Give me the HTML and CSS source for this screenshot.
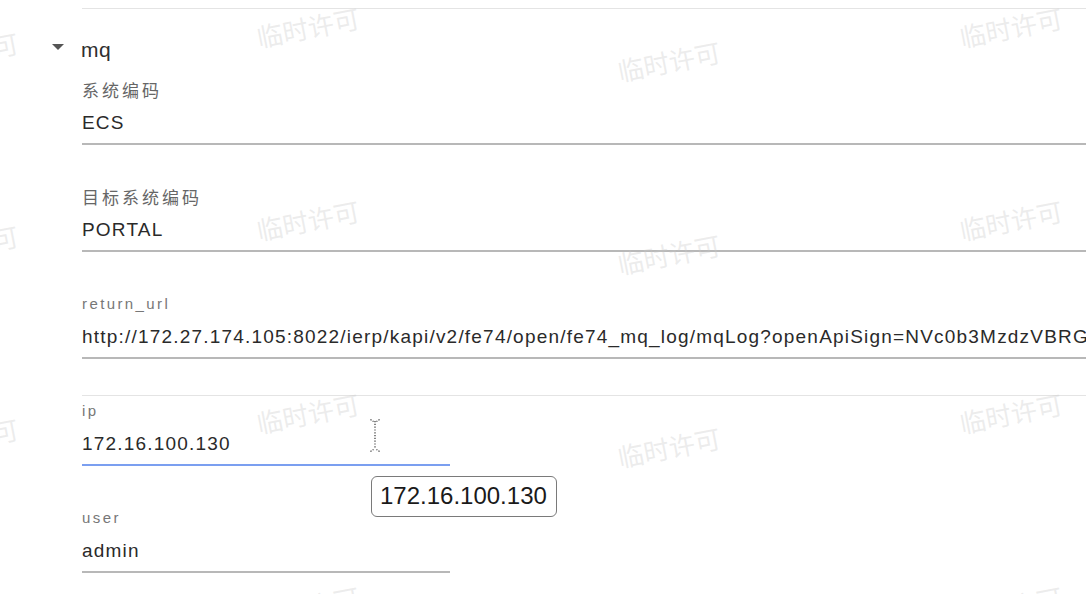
FILE: index.html
```html
<!DOCTYPE html>
<html lang="zh">
<head>
<meta charset="utf-8">
<title>mq</title>
<link rel="stylesheet" href="styles.css">
</head>
<body>
<div class="page">
  <div class="form">
    <div class="prev-group"></div>
    <div class="group-head">
      <span class="caret"></span>
      <span class="group-title">mq</span>
    </div>
    <div class="field field-first">
      <div class="label label-cjk">系统编码</div>
      <div class="value">ECS</div>
    </div>
    <div class="field">
      <div class="label label-cjk">目标系统编码</div>
      <div class="value">PORTAL</div>
    </div>
    <div class="field">
      <div class="label">return_url</div>
      <div class="value">http://172.27.174.105:8022/ierp/kapi/v2/fe74/open/fe74_mq_log/mqLog?openApiSign=NVc0b3MzdzVBRGxhY1NtZk5PV1E</div>
    </div>
    <div class="separator"></div>
    <div class="field field-narrow field-focus field-after-sep">
      <div class="label">ip</div>
      <div class="value">172.16.100.130</div>
    </div>
    <div class="field field-narrow">
      <div class="label">user</div>
      <div class="value">admin</div>
    </div>
  </div>

  <div class="watermarks">
    <span class="wm c0 r0">临时许可</span>
    <span class="wm c0 r1">临时许可</span>
    <span class="wm c0 r2">临时许可</span>
    <span class="wm c1 r0">临时许可</span>
    <span class="wm c1 r1">临时许可</span>
    <span class="wm c1 r2">临时许可</span>
    <span class="wm c1 r3">临时许可</span>
    <span class="wm c2 r0">临时许可</span>
    <span class="wm c2 r1">临时许可</span>
    <span class="wm c2 r2">临时许可</span>
    <span class="wm c2 r3">临时许可</span>
    <span class="wm c3 r0">临时许可</span>
    <span class="wm c3 r1">临时许可</span>
    <span class="wm c3 r2">临时许可</span>
    <span class="wm c3 r3">临时许可</span>
  </div>

  <svg class="ibeam" width="12" height="35" viewBox="0 0 12 35" aria-hidden="true">
    <path d="M1.5 1.5 L4.5 3.5 M10.5 1.5 L7.5 3.5" stroke="#333" stroke-width="1.2" stroke-dasharray="1.2 1.4" fill="none"/>
    <path d="M6 3 L6 31" stroke="#333" stroke-width="1.2" stroke-dasharray="1.2 1.6" fill="none"/>
    <path d="M1.5 33.5 L4.5 31.5 M10.5 33.5 L7.5 31.5" stroke="#333" stroke-width="1.2" stroke-dasharray="1.2 1.4" fill="none"/>
  </svg>

  <div class="tooltip">172.16.100.130</div>
</div>
</body>
</html>
```

FILE: styles.css
```css
html, body {
  margin: 0;
  padding: 0;
  background: #ffffff;
}

body {
  font-family: "Liberation Sans", Arial, "Noto Sans CJK SC", sans-serif;
  color: #333333;
  overflow: hidden;
}

.page {
  position: relative;
  width: 1086px;
  height: 594px;
  overflow: hidden;
}

.form {
  padding-left: 82px;
  display: flex;
  flex-direction: column;
}

.prev-group {
  height: 8px;
  border-bottom: 1px solid #e4e4e4;
}

.group-head {
  display: flex;
  align-items: flex-start;
  gap: 17px;
  margin-left: -30px;
  margin-top: 27px;
  height: 28px;
}

.caret {
  width: 0;
  height: 0;
  margin-top: 8px;
  border-left: 6.5px solid transparent;
  border-right: 6.5px solid transparent;
  border-top: 6px solid #555555;
}

.group-title {
  font-size: 21px;
  line-height: 28px;
  letter-spacing: 0.6px;
  color: #2f2f2f;
}

.field {
  display: flex;
  flex-direction: column;
  gap: 9px;
  padding-top: 42px;
  padding-bottom: 6px;
  border-bottom: 2px solid #b8b8b8;
}

.field-first {
  padding-top: 16px;
}

.field-narrow {
  width: 368px;
}

.field-focus {
  border-bottom-color: #7b9ff0;
}

.field-after-sep {
  padding-top: 5px;
}

.separator {
  margin-top: 36px;
  border-top: 1px solid #e4e4e4;
}

.label {
  font-size: 15px;
  line-height: 20px;
  height: 20px;
  letter-spacing: 2.4px;
  color: #777777;
  white-space: nowrap;
}

.label-cjk {
  font-family: "Noto Sans CJK SC", sans-serif;
  font-size: 17px;
  letter-spacing: 3px;
  color: #666666;
}

.value {
  font-size: 19px;
  line-height: 28px;
  height: 28px;
  letter-spacing: 1.2px;
  color: #2a2a2a;
  white-space: nowrap;
  overflow: hidden;
}

.watermarks {
  position: absolute;
  inset: 0;
  pointer-events: none;
  overflow: hidden;
}

.wm {
  position: absolute;
  width: 104px;
  height: 30px;
  font-family: "Noto Sans CJK SC", sans-serif;
  font-size: 26px;
  line-height: 30px;
  color: rgba(200, 200, 200, 0.34);
  white-space: nowrap;
  transform: rotate(-11deg);
  transform-origin: 50% 50%;
}

.c0 { left: -85px; margin-top: 25px; }
.c1 { left: 256px; }
.c2 { left: 617px; margin-top: 34px; }
.c3 { left: 959px; }

.r0 { top: 12px; }
.r1 { top: 205px; }
.r2 { top: 398px; }
.r3 { top: 591px; }

.ibeam {
  position: absolute;
  left: 369px;
  top: 418px;
}

.tooltip {
  position: absolute;
  left: 371px;
  top: 476px;
  box-sizing: border-box;
  width: 186px;
  height: 41px;
  padding-left: 8px;
  border: 1.5px solid #7a7a7a;
  border-radius: 6px;
  background: #ffffff;
  font-size: 24px;
  line-height: 38px;
  color: #1a1a1a;
  white-space: nowrap;
}
```
